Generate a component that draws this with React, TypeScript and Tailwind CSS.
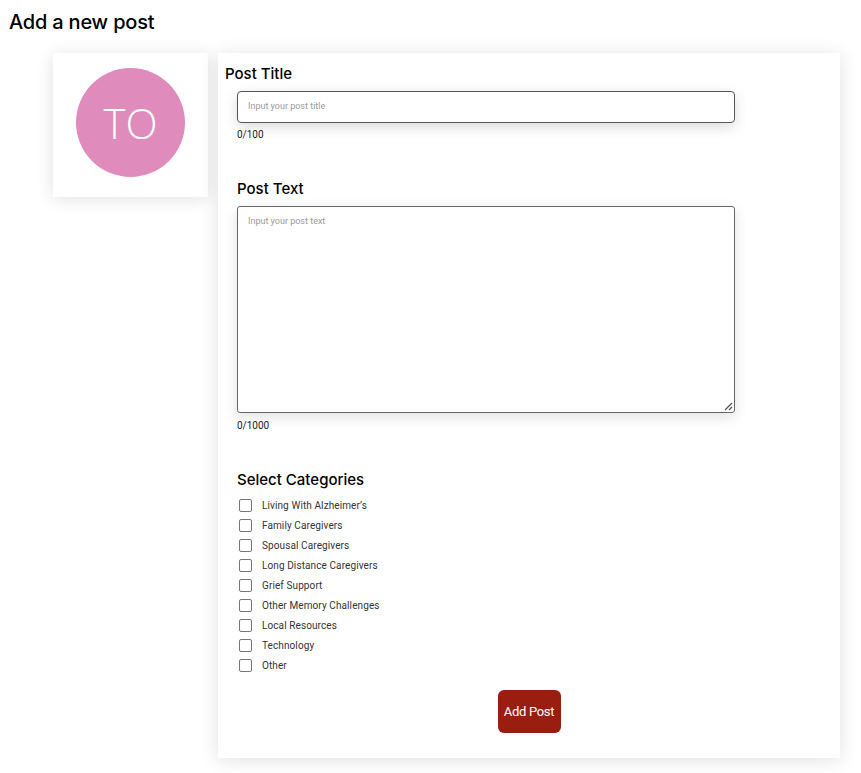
import React from "react";

const categories = [
  "Living With Alzheimer’s",
  "Family Caregivers",
  "Spousal Caregivers",
  "Long Distance Caregivers",
  "Grief Support",
  "Other Memory Challenges",
  "Local Resources",
  "Technology",
  "Other",
];

export default function App() {
  return (
    <div className="min-h-[773px] bg-white text-black" style={{ fontFamily: "Inter, 'Noto Sans', sans-serif" }}>
      <h1 className="pl-[9px] pt-[10px] text-[20px] leading-[24px] font-medium tracking-[-0.2px]">Add a new post</h1>
      <div className="flex items-start gap-[10px] pl-[53px] mt-[19px]">
        <div className="w-[155px] h-[144px] bg-white shadow-[0_2px_16px_rgba(0,0,0,0.12)] flex justify-center pt-[15px]">
          <div className="w-[109px] h-[109px] rounded-full bg-[#df8bbc] flex items-center justify-center">
            <span className="text-white text-[42px] font-light leading-none" style={{ fontFamily: "'Open Sans', sans-serif" }}>TO</span>
          </div>
        </div>
        <div className="w-[622px] h-[705px] bg-white shadow-[0_2px_18px_rgba(0,0,0,0.12)] pt-[11px] flex flex-col">
          <div className="pl-[7px] text-[15px] leading-[20px] font-medium">Post Title</div>
          <div className="pl-[19px] flex flex-col">
            <div className="mt-[7px] w-[498px] h-[32px] border border-[#555] rounded-[4px] shadow-[0_4px_14px_rgba(0,0,0,0.14)] flex items-center pl-[10px]">
              <span className="text-[9px] text-[#9a9a9a]" style={{ fontFamily: "Roboto, sans-serif" }}>Input your post title</span>
            </div>
            <div className="mt-[6px] text-[10px] leading-[12px] text-[#222]" style={{ fontFamily: "Roboto, sans-serif" }}>0/100</div>
            <div className="mt-[38px] text-[15px] leading-[20px] font-medium">Post Text</div>
            <div className="relative mt-[7px] w-[498px] h-[207px] border border-[#666] rounded-[3px] shadow-[0_4px_14px_rgba(0,0,0,0.12)] pl-[10px] pt-[8px]">
              <span className="text-[9px] text-[#9a9a9a] block" style={{ fontFamily: "Roboto, sans-serif" }}>Input your post text</span>
              <svg className="absolute right-[1px] bottom-[1px]" width="10" height="10" viewBox="0 0 10 10">
                <line x1="9" y1="2" x2="2" y2="9" stroke="#555" strokeWidth="1.2" />
                <line x1="9" y1="6" x2="6" y2="9" stroke="#555" strokeWidth="1.2" />
              </svg>
            </div>
            <div className="mt-[7px] text-[10px] leading-[12px] text-[#222]" style={{ fontFamily: "Roboto, sans-serif" }}>0/1000</div>
            <div className="mt-[38px] text-[15px] leading-[20px] font-medium">Select Categories</div>
            <div className="mt-[5px] flex flex-col">
              {categories.map((c) => (
                <div key={c} className="h-[20px] flex items-center">
                  <div className="ml-[2px] w-[13px] h-[13px] border border-[#767676] rounded-[2px] bg-white" />
                  <span className="ml-[10px] text-[10px] text-[#333] tracking-[0.1px]" style={{ fontFamily: "Roboto, sans-serif" }}>{c}</span>
                </div>
              ))}
            </div>
          </div>
          <button className="mt-[15px] mx-auto w-[63px] h-[43px] rounded-[6px] bg-[#991e10] text-white text-[13px] tracking-[-0.3px]" style={{ fontFamily: "Roboto, sans-serif" }}>
            Add Post
          </button>
        </div>
      </div>
    </div>
  );
}
